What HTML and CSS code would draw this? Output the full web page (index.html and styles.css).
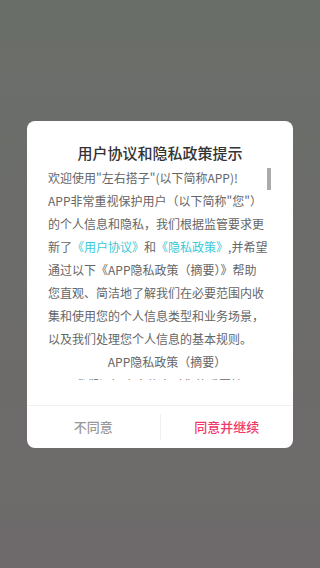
FILE: index.html
```html
<!DOCTYPE html>
<html lang="zh-CN">
<head>
<meta charset="utf-8">
<meta name="viewport" content="width=device-width, initial-scale=1">
<title>用户协议和隐私政策提示</title>
<link rel="stylesheet" href="styles.css">
</head>
<body>
<div class="screen">
  <div class="dialog">
    <h1 class="title">用户协议和隐私政策提示</h1>
    <div class="content">
      <p class="line">欢迎使用"左右搭子"(以下简称APP)!</p>
      <p class="line">APP非常重视保护用户（以下简称"您"）</p>
      <p class="line">的个人信息和隐私，我们根据监管要求更</p>
      <p class="line">新了<a class="link">《用户协议》</a>和<a class="link">《隐私政策》</a>,并希望</p>
      <p class="line">通过以下《APP隐私政策（摘要）》帮助</p>
      <p class="line">您直观、简洁地了解我们在必要范围内收</p>
      <p class="line">集和使用您的个人信息类型和业务场景，</p>
      <p class="line">以及我们处理您个人信息的基本规则。</p>
      <p class="line heading">APP隐私政策（摘要）</p>
      <p class="line indent">我们深知个人信息对您的重要性</p>
    </div>
    <div class="thumb"></div>
    <div class="actions">
      <button class="btn btn-decline">不同意</button>
      <button class="btn btn-accept">同意并继续</button>
    </div>
  </div>
</div>
</body>
</html>
```
FILE: styles.css
```css
html, body {
  margin: 0;
  padding: 0;
}
body {
  font-family: "Noto Sans CJK SC", "Noto Sans", sans-serif;
}
.screen {
  width: 320px;
  height: 568px;
  background: linear-gradient(#6a6e69, #6e6a6b);
  display: flex;
  align-items: center;
  justify-content: center;
}
.dialog {
  position: relative;
  width: 266px;
  height: 327px;
  background: #fff;
  border-radius: 8px;
  display: flex;
  flex-direction: column;
  overflow: hidden;
}
.title {
  margin: 0;
  padding-top: 20px;
  height: 24px;
  line-height: 24px;
  font-size: 15px;
  font-weight: 500;
  color: #333;
  text-align: center;
}
.content {
  margin-top: 1px;
  height: 214px;
  overflow: hidden;
  padding: 0 21px;
}
.line {
  margin: 0;
  font-size: 12px;
  line-height: 23px;
  height: 23px;
  color: #666;
  white-space: nowrap;
}
.link {
  color: #3cc9d6;
}
.heading {
  text-align: center;
  padding-left: 14px;
}
.indent {
  text-indent: 27px;
}
.thumb {
  position: absolute;
  right: 22px;
  top: 47px;
  width: 4px;
  height: 22px;
  background: #aaa;
}
.actions {
  margin-top: 25px;
  border-top: 1px solid #f0f0f0;
  height: 42px;
  display: flex;
  align-items: center;
}
.btn {
  flex: 1;
  background: none;
  border: 0;
  margin: 0;
  padding: 0;
  height: 26px;
  font-family: inherit;
  font-size: 13px;
  font-weight: 500;
  line-height: 26px;
}
.btn-decline {
  color: #999;
  border-right: 1px solid #f0f0f0;
}
.btn-accept {
  color: #f2386a;
}
```
